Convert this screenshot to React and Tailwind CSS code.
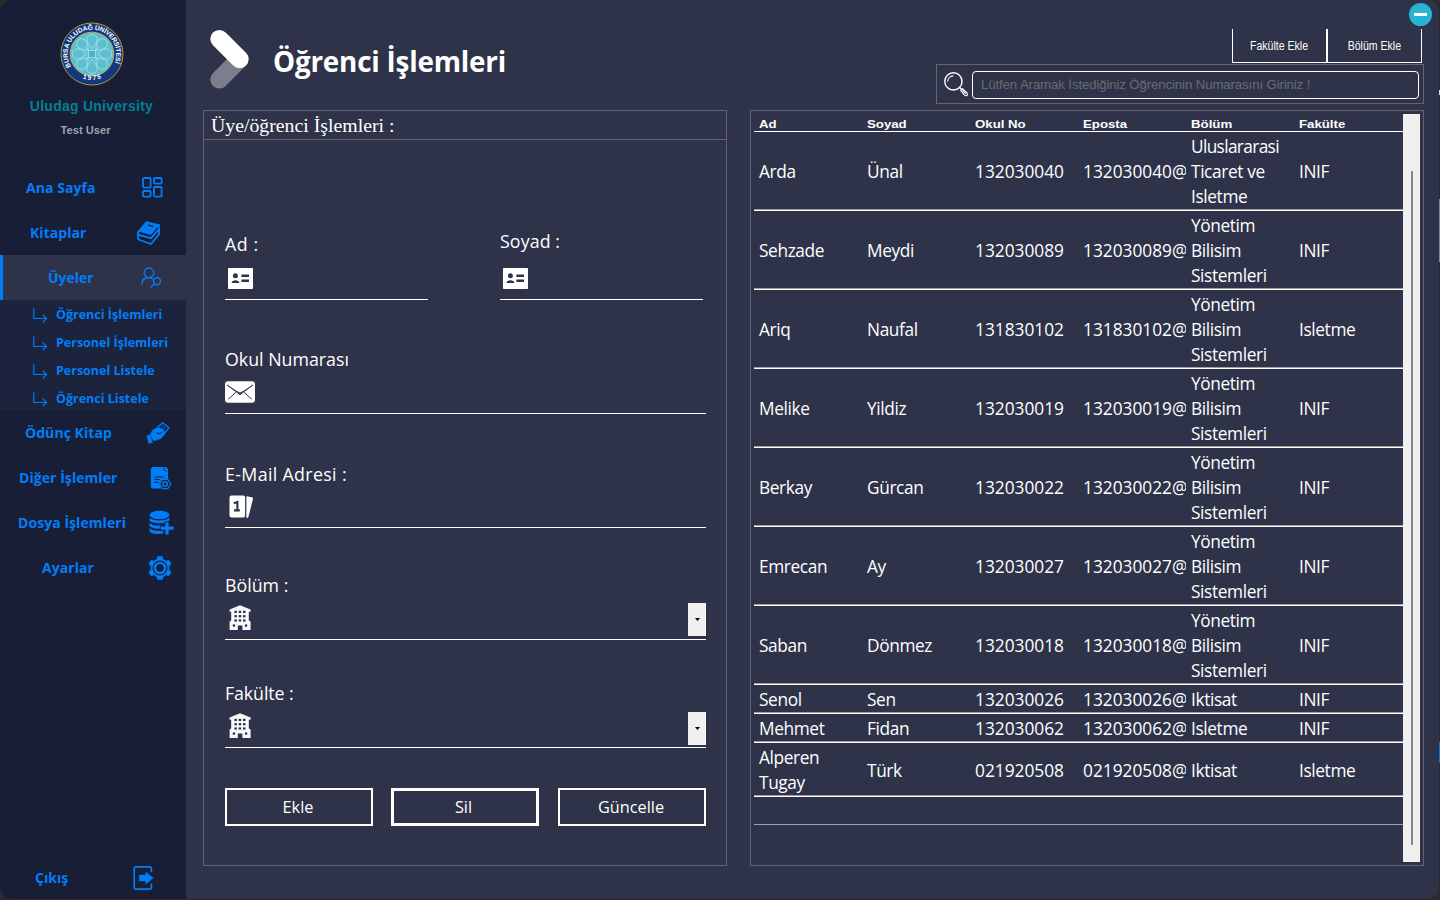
import React from "react";

const BLUE = "#007ef9";
const DARK = "#2e3349";

function Logo() {
  return (
    <svg width="64" height="64" viewBox="0 0 64 64" className="block">
      <defs>
        <path id="arcTop" d="M 11.2 44.5 A 24.3 24.3 0 1 1 52.8 44.5" />
        <path id="arcBottom" d="M 14 51.6 A 28.6 28.6 0 0 0 50 51.6" />
      </defs>
      <circle cx="32" cy="32" r="31" fill="#14387f" stroke="#b39a2c" strokeWidth="1" />
      <circle cx="32" cy="32" r="21.8" fill="#5bbfd0" stroke="#c2b04a" strokeWidth="1" />
      <g fill="none" stroke="#a5dfe6" strokeWidth="0.9">
        {[0, 45, 90, 135, 180, 225, 270, 315].map((a) => (
          <path key={a} transform={`rotate(${a} 32 32)`} d="M32 27 L27.6 20.5 C25.5 15.5 28.5 12.5 32 12.3 C35.5 12.5 38.5 15.5 36.4 20.5 Z" />
        ))}
        <path d="M25 25 L39 39 M39 25 L25 39" />
        <rect x="28.5" y="28.5" width="7" height="7" fill="#4fb3c8" />
      </g>
      <text fill="#fff" fontFamily="Liberation Sans, sans-serif" fontWeight="700" fontSize="6.6">
        <textPath href="#arcTop" startOffset="0" textLength="98">BURSA ULUDAĞ ÜNİVERSİTESİ</textPath>
      </text>
      <text fill="#fff" fontFamily="Liberation Sans, sans-serif" fontWeight="700" fontSize="6.6" textAnchor="middle">
        <textPath href="#arcBottom" startOffset="50%" textLength="19">1975</textPath>
      </text>
    </svg>
  );
}

const DashIcon = () => (
  <svg width="21" height="21" viewBox="0 0 21 21" fill="none" stroke={BLUE} strokeWidth="1.8">
    <rect x="1" y="1" width="7.6" height="9.6" rx="1" />
    <rect x="12" y="1" width="7.6" height="5.6" rx="1" />
    <rect x="1" y="14" width="7.6" height="5.6" rx="1" />
    <rect x="12" y="10" width="7.6" height="9.6" rx="1" />
  </svg>
);

const BooksIcon = () => (
  <svg width="23" height="24" viewBox="0 0 23 24" fill="none" stroke={BLUE} strokeLinejoin="round" strokeLinecap="round">
    <path d="M9.6 0.8 L22 3.8 L14 13.4 L1.8 10 Z" fill={BLUE} strokeWidth="1" />
    <path d="M11.4 4.1 L16 5.3" stroke="#181e36" strokeWidth="1.3" />
    <path d="M1.8 10 C0.4 11.6 0.9 13.6 2.4 14.2 L14 17.2 L22 8.2 V4" strokeWidth="1.8" />
    <path d="M1 13.4 V17.4 Q1.2 18.6 2.6 19 L14 23 L22 13.4 V9" strokeWidth="1.8" />
  </svg>
);

const UsersIcon = () => (
  <svg width="21" height="21" viewBox="0 0 21 21" fill="none" stroke={BLUE} strokeWidth="1.4" strokeLinecap="round">
    <circle cx="8" cy="5.8" r="4.8" />
    <path d="M0.9 17 C0.9 12.8 3.6 10.8 7.8 10.8" />
    <circle cx="16" cy="14.2" r="3.5" />
    <path d="M13.4 16.8 L10.2 19.9 M9.5 10.8 L11.6 11.8" />
  </svg>
);

const LendIcon = () => (
  <svg width="24" height="24" viewBox="0 0 24 24" fill="none" stroke={BLUE} strokeWidth="1.3" strokeLinejoin="round">
    <path d="M11 7 L16.5 1.8 L23 7 L14 17.5 L12 16" />
    <path d="M16.2 4.8 L19.8 7.8" strokeDasharray="1.5 1" />
    <path d="M4.5 13.5 C5.5 9.5 8.5 7 12.2 7 C15 6.6 17.5 7.8 18 9.2 C18.4 10.6 16.8 10.9 15.4 11.5 L18.8 10.6 C19.4 13.8 14.8 18.5 10.5 19 L7.5 19.7 Z" fill={BLUE} strokeWidth="0.6" />
    <path d="M11 11.6 C12.4 13.5 14.4 12.8 15.6 11" stroke="#181e36" strokeWidth="1.1" />
    <path d="M0.8 14.8 L4 13.8 L6.4 21.4 L2.8 22.8 Z" fill={BLUE} strokeWidth="0.4" />
  </svg>
);

const FileIcon = () => (
  <svg width="22" height="24" viewBox="0 0 22 24">
    <path d="M3 1 H13.5 L18 5.5 V13 A6 6 0 0 0 9.5 19 L11 22.6 H3 A2.4 2.4 0 0 1 0.8 20.4 V3.2 A2.4 2.4 0 0 1 3 1 Z" fill={BLUE} />
    <path d="M13.5 1 H16 L18 3 V5.5 H15.2 C14 5.3 13.5 4.4 13.5 3 Z" fill={BLUE} />
    <path d="M13.8 1.8 V3.4 Q14 5 15.6 5 H17" stroke="#181e36" strokeWidth="0.9" fill="none" />
    <path d="M4.5 11 H14 M4.5 13.6 H9.5 M4.5 16.4 H8.5" stroke="#181e36" strokeWidth="1" />
    <path d="M12.4 13.3 H17.8 L20.8 18 L17.8 22.7 H12.4 L9.6 18 Z" fill="#181e36" stroke={BLUE} strokeWidth="1.3" strokeLinejoin="round" />
    <circle cx="15.1" cy="18" r="2.2" fill="none" stroke={BLUE} strokeWidth="1.5" />
  </svg>
);

const DbIcon = () => (
  <svg width="25" height="25" viewBox="0 0 25 25">
    <ellipse cx="10.5" cy="5" rx="10" ry="4.2" fill={BLUE} />
    <g fill={BLUE}>
      <path d="M0.5 7.6 C3.5 11.4 17.5 11.4 20.5 7.6 V10 C18.5 14.4 2.5 14.4 0.5 10.6 Z" />
      <path d="M0.5 12.8 C3 16 10 15.8 14 15.2 V18 C8 19.4 2 18.4 0.5 15.8 Z" />
      <path d="M0.5 18 C3 21 9 21 14.4 20.4 V23.6 C8 24.4 1.5 23.8 0.5 20.9 Z" />
    </g>
    <path d="M18 11.6 V25 M11.2 18.2 H25" stroke="#181e36" strokeWidth="5.4" />
    <path d="M18 12.2 V24.4 M11.8 18.2 H24.6" stroke={BLUE} strokeWidth="3.2" />
  </svg>
);

const GearIcon = () => (
  <svg width="24" height="24" viewBox="0 0 24 24" fill="none" stroke={BLUE}>
    {[0, 60, 120, 180, 240, 300].map((a) => (
      <path key={a} transform={`rotate(${a} 12 12)`} d="M9 4 L9.7 0.4 H14.3 L15 4 Z" fill={BLUE} strokeWidth="0.6" />
    ))}
    <circle cx="12" cy="12" r="8.5" strokeWidth="2" />
    <circle cx="12" cy="12" r="5" strokeWidth="2.6" />
  </svg>
);

const ExitIcon = () => (
  <svg width="22" height="24" viewBox="0 0 22 24" fill="none" stroke={BLUE} strokeWidth="1.7">
    <path d="M18.4 6.2 V3 Q18.4 0.9 16.6 0.9 H3 Q1.2 0.9 1.2 3 V21 Q1.2 23.1 3 23.1 H16.6 Q18.4 23.1 18.4 21 V17.6" />
    <path d="M6.2 9 H12.6 V5.8 L20.4 12 L12.6 18.2 V15 H6.2 Z" fill={BLUE} strokeWidth="0.3" />
  </svg>
);

const SubArrow = () => (
  <svg width="15" height="15" viewBox="0 0 15 15" fill="none" stroke={BLUE} strokeWidth="1.2">
    <path d="M0.8 0.5 V10.5 H13.4 M9.6 6.6 L13.6 10.5 L9.6 14.4" />
  </svg>
);

const IdIcon = () => (
  <svg width="25" height="21" viewBox="0 0 25 21" className="block">
    <rect width="25" height="21" rx="0.8" fill="#fff" />
    <circle cx="7.4" cy="7.7" r="2.5" fill={DARK} />
    <path d="M3.6 15 C3.6 11.4 11.4 11.4 11.4 15 Z" fill={DARK} />
    <path d="M13.4 7.7 H21 M13.4 12.8 H21" stroke={DARK} strokeWidth="2.6" />
  </svg>
);

const MailIcon = () => (
  <svg width="30" height="22" viewBox="0 0 30 22" className="block">
    <rect y="0.3" width="30" height="21.4" rx="3" fill="#fff" />
    <path d="M2 4 L11.5 11 L15 13.8 L18.5 11 L28 4 L18.8 10 L15 12 L11.2 10 Z" fill={DARK} stroke={DARK} strokeWidth="0.8" />
    <path d="M3.2 18.2 L11.3 11 M26.8 18.2 L18.7 11" stroke={DARK} strokeWidth="1" />
  </svg>
);

const CardsIcon = () => (
  <svg width="25" height="24" viewBox="0 0 25 24" className="block">
    <rect x="0.5" y="0.5" width="15.6" height="22" rx="2" fill="#fff" />
    <path d="M17.4 1.2 L23 2.3 Q24.2 2.6 24 3.8 L19.4 22 Q18.8 23.2 17.4 22.8 Z" fill="#fff" />
    <path d="M4.8 8.2 L8.4 7 V15.4 M5 15.4 H10.8" fill="none" stroke={DARK} strokeWidth="2.1" />
  </svg>
);

const BuildingIcon = () => (
  <svg width="22" height="26" viewBox="0 0 22 26" className="block">
    <path d="M11 0.2 L21.6 4.6 V6.8 H19.8 V15.6 L21.6 16.6 V25 H13.4 V20.6 H8.8 V25 H0.6 V16.6 L2.2 15.6 V6.8 H0.6 V4.6 Z" fill="#f8f9fb" />
    <g fill={DARK}>
      {[5.8, 10.1, 14.4].map((y) => [5.4, 9.7, 14].map((x) => <rect key={x + "-" + y} x={x} y={y} width="2.5" height="2.2" />))}
      <rect x="3.8" y="19.4" width="2.3" height="2.3" />
      <rect x="15.9" y="19.4" width="2.3" height="2.3" />
    </g>
  </svg>
);

const SearchIcon = () => (
  <svg width="25" height="25" viewBox="0 0 25 25" fill="none" stroke="#fff" strokeWidth="1.4" strokeLinecap="round">
    <circle cx="9.4" cy="9.4" r="8.6" />
    <path d="M3.8 9.2 A5.6 5.6 0 0 1 9 3.9" strokeWidth="1.1" />
    <path d="M15.6 15.4 L17.4 17.2" />
    <path d="M16.8 18.6 L18.6 16.8 L22.8 20.6 Q24 22.4 23 23.4 Q21.8 24.2 20.4 22.8 Z M19 18.8 L21.4 21.4" strokeWidth="1.2" />
  </svg>
);

const topNav = [
  { label: "Ana Sayfa", pad: "pl-[26px]", icon: <DashIcon />, right: "pr-[23px]" },
  { label: "Kitaplar", pad: "pl-[30px]", icon: <BooksIcon />, right: "pr-[26px]" },
];
const subNav = ["Öğrenci İşlemleri", "Personel İşlemleri", "Personel Listele", "Öğrenci Listele"];
const bottomNav = [
  { label: "Ödünç Kitap", pad: "pl-[25px]", icon: <LendIcon />, right: "pr-4" },
  { label: "Diğer İşlemler", pad: "pl-[19px]", icon: <FileIcon />, right: "pr-[14px]" },
  { label: "Dosya İşlemleri", pad: "pl-[18px]", icon: <DbIcon />, right: "pr-3" },
  { label: "Ayarlar", pad: "pl-[42px]", icon: <GearIcon />, right: "pr-[14px]" },
];

function NavRow({ item }) {
  return (
    <div className={`flex h-[45px] shrink-0 items-center justify-between ${item.pad} ${item.right}`}>
      <span className="whitespace-nowrap text-[14px] font-bold leading-5 tracking-[0.06px]">{item.label}</span>
      {item.icon}
    </div>
  );
}

function Sidebar() {
  return (
    <aside className="flex h-full w-[186px] shrink-0 flex-col bg-[#181e36] text-[#007ef9]">
      <div className="flex h-[165px] shrink-0 flex-col items-center pt-[22px] pr-[3px] font-['Liberation_Sans',sans-serif]">
        <Logo />
        <div className="mt-[10px] whitespace-nowrap text-[14px] font-bold leading-5 tracking-[0.25px] text-[#047e95]">Uludag University</div>
        <div className="mt-[6px] mr-[11px] scale-x-[1.06] whitespace-nowrap text-[10.5px] font-bold leading-4 text-[#9ea1b0]">Test User</div>
      </div>
      {topNav.map((n) => <NavRow key={n.label} item={n} />)}
      <div className="flex h-[45px] shrink-0 items-center justify-between border-l-3 border-[#007ef9] bg-[#2e3349] pl-[45px] pr-6">
        <span className="text-[14px] font-bold leading-5">Üyeler</span>
        <UsersIcon />
      </div>
      <div className="h-[110px] shrink-0 bg-[#1c233d] pt-px">
        {subNav.map((s) => (
          <div key={s} className="flex h-7 items-center gap-[8px] pl-[33px]">
            <SubArrow />
            <span className="whitespace-nowrap text-[12.5px] font-bold">{s}</span>
          </div>
        ))}
      </div>
      {bottomNav.map((n) => <NavRow key={n.label} item={n} />)}
      <div className="mt-auto flex h-[42px] items-center justify-between pl-[35px] pr-[31px]">
        <span className="text-[14px] font-bold leading-5">Çıkış</span>
        <ExitIcon />
      </div>
    </aside>
  );
}

function Field({ label, width, labelClass, rowClass, iconPad, icon, combo }) {
  return (
    <div className={width}>
      <div className={`h-[25px] whitespace-nowrap text-[17.8px] leading-[25px] ${labelClass || ""}`}>{label}</div>
      <div className={`flex items-start justify-between border-b border-white ${rowClass}`}>
        <div className={iconPad}>{icon}</div>
        {combo && (
          <div className={combo}>
            <div className="flex h-[33px] w-[18px] items-center justify-center border-r border-white bg-[#f0f0f0] pl-px">
              <svg width="5" height="3" viewBox="0 0 5 3"><path d="M0 0 H5 L2.5 3 Z" fill="#000" /></svg>
            </div>
          </div>
        )}
      </div>
    </div>
  );
}

function FormPanel() {
  return (
    <section className="h-[756px] w-[524px] shrink-0 border border-[#64656b]">
      <div className="h-[29px] border-b border-[#64656b] pl-[7px] font-['Liberation_Serif',serif] text-[19.8px] leading-[29px]">Üye/öğrenci İşlemleri :</div>
      <div className="pl-[21px] pr-5">
        <div className="flex items-end pt-[89px]">
          <Field label="Ad :" width="w-[203px]" labelClass="tracking-[0.6px]" rowClass="h-[43px]" iconPad="pt-[11px] pl-[3px]" icon={<IdIcon />} />
          <div className="w-[72px]" />
          <Field label="Soyad :" width="w-[203px]" labelClass="tracking-[0.1px]" rowClass="h-[46px]" iconPad="pt-[14px] pl-[3px]" icon={<IdIcon />} />
        </div>
        <div className="pt-[47px]"><Field label="Okul Numarası" rowClass="h-[42px]" iconPad="pt-[9px]" icon={<MailIcon />} /></div>
        <div className="pt-[48px]"><Field label="E-Mail Adresi :" labelClass="tracking-[0.35px]" rowClass="h-[41px]" iconPad="pt-2 pl-[4px]" icon={<CardsIcon />} /></div>
        <div className="pt-[45px]"><Field label="Bölüm :" rowClass="h-[42px]" iconPad="pt-[7px] pl-[4px]" icon={<BuildingIcon />} combo="pt-[5px]" /></div>
        <div className="pt-[41px]"><Field label="Fakülte :" labelClass="tracking-[-0.1px]" rowClass="h-[42px]" iconPad="pt-[7px] pl-[4px]" icon={<BuildingIcon />} combo="pt-[6px]" /></div>
        <div className="flex pt-10 text-[16.3px]">
          <button className="h-[38px] w-[148px] border-2 border-white pr-[2px]">Ekle</button>
          <button className="ml-[18px] h-[38px] w-[148px] border-3 border-white pr-[3px]">Sil</button>
          <button className="ml-[19px] h-[38px] w-[148px] border-2 border-white pr-[2px]">Güncelle</button>
        </div>
      </div>
    </section>
  );
}

const YBS = ["Yönetim", "Bilisim", "Sistemleri"];
const rows = [
  { c: [["Arda"], ["Ünal"], "132030040", ["Uluslararasi", "Ticaret ve", "Isletme"], ["INIF"]], h: "h-[79px]" },
  { c: [["Sehzade"], ["Meydi"], "132030089", YBS, ["INIF"]], h: "h-[79px]" },
  { c: [["Ariq"], ["Naufal"], "131830102", YBS, ["Isletme"]], h: "h-[79px]" },
  { c: [["Melike"], ["Yildiz"], "132030019", YBS, ["INIF"]], h: "h-[79px]" },
  { c: [["Berkay"], ["Gürcan"], "132030022", YBS, ["INIF"]], h: "h-[79px]" },
  { c: [["Emrecan"], ["Ay"], "132030027", YBS, ["INIF"]], h: "h-[79px]" },
  { c: [["Saban"], ["Dönmez"], "132030018", YBS, ["INIF"]], h: "h-[79px]" },
  { c: [["Senol"], ["Sen"], "132030026", ["Iktisat"], ["INIF"]], h: "h-[29px]" },
  { c: [["Mehmet"], ["Fidan"], "132030062", ["Isletme"], ["INIF"]], h: "h-[29px]" },
  { c: [["Alperen", "Tugay"], ["Türk"], "021920508", ["Iktisat"], ["Isletme"]], h: "h-[54px]" },
];

function Lines({ lines }) {
  return (
    <div className="tracking-[-0.38px]">
      {lines.map((l) => <div key={l} className={l === "Uluslararasi" ? "tracking-[-0.65px]" : ""}>{l}</div>)}
    </div>
  );
}

function TablePanel() {
  return (
    <section className="flex h-[756px] w-[674px] shrink-0 border border-[#64656b] p-[3px]">
      <div className="w-[649px] shrink-0">
        <div className="grid h-[18px] grid-cols-[repeat(6,108px)] items-center border-b border-white font-['Liberation_Sans',sans-serif] text-[11.5px] font-bold leading-[14px]">
          {["Ad", "Soyad", "Okul No", "Eposta", "Bölüm", "Fakülte"].map((h) => (
            <div key={h} className="pl-[5px] pt-[3px]"><span className="inline-block origin-left scale-x-[1.15] whitespace-nowrap">{h}</span></div>
          ))}
        </div>
        {rows.map((r) => (
          <div key={r.c[2]} className={`border-b border-white ${r.h}`}>
            <div className="grid h-full grid-cols-[repeat(6,108px)] items-center border-b border-[#a0a0a0] pt-[2px] text-[17.3px] leading-[25px] *:whitespace-nowrap *:pl-[5px]">
              <div><Lines lines={r.c[0]} /></div>
              <div><Lines lines={r.c[1]} /></div>
              <div>{r.c[2]}</div>
              <div className="overflow-hidden">{r.c[2]}@</div>
              <div><Lines lines={r.c[3]} /></div>
              <div><Lines lines={r.c[4]} /></div>
            </div>
          </div>
        ))}
        <div className="h-[28px] border-b border-[#a0a0a0]" />
      </div>
      <div className="flex h-full w-[17px] shrink-0 justify-center bg-[#f0f0f0] pt-[57px] pb-[17px]">
        <div className="w-[2px] bg-[#868686]" />
      </div>
    </section>
  );
}

function Header() {
  return (
    <header className="flex h-[110px] justify-between">
      <div className="flex pl-[23px]">
        <svg width="42" height="62" viewBox="0 0 42 62" className="mt-7 block">
          <path d="M10.3 51.6 L30.6 31.2" stroke="#7b7e8c" strokeWidth="18" strokeLinecap="round" />
          <path d="M10.3 10.9 L30.6 31.2" stroke="#fff" strokeWidth="18" strokeLinecap="round" />
        </svg>
        <h1 className="mt-[41px] ml-[22px] whitespace-nowrap text-[27.8px] font-bold leading-10 tracking-[-0.2px]">Öğrenci İşlemleri</h1>
      </div>
      <div className="flex flex-col items-end font-['Liberation_Sans',sans-serif]">
        <div className="mr-[7px] mt-[3px] flex size-[23px] items-center justify-center rounded-full bg-[#25b5d3]">
          <div className="h-[3px] w-[13px] bg-white" />
        </div>
        <div className="mt-[3px] mr-[17px] flex h-[34px] text-[12px] leading-[34px]">
          <div className="flex w-[95px] justify-center border-x border-b border-white"><span className="scale-x-[0.88] whitespace-nowrap">Fakülte Ekle</span></div>
          <div className="flex w-[95px] justify-center border-x border-b border-white"><span className="scale-x-[0.88] whitespace-nowrap">Bölüm Ekle</span></div>
        </div>
        <div className="mr-[15px] mt-px flex h-10 w-[488px] items-center gap-[3px] border border-[#64656b] pl-[7px]">
          <SearchIcon />
          <div className="mt-[2px] h-7 w-[447px] rounded-[4px] border border-white pl-2 whitespace-nowrap text-[13.3px] leading-[25px] tracking-[-0.15px] text-[#696b6f]">Lütfen Aramak İstediğiniz Öğrencinin Numarasını Giriniz !</div>
        </div>
      </div>
    </header>
  );
}

export default function App() {
  return (
    <div className="flex h-[900px] w-[1440px] overflow-hidden bg-[#2b2b2b] font-['Open_Sans','Noto_Sans',sans-serif] text-white">
      <div className="flex h-[899px] w-[1439px] shrink-0 overflow-hidden rounded-[12px] bg-[#2e3349]">
        <Sidebar />
        <main className="w-[1253px] shrink-0">
          <Header />
          <div className="flex gap-[23px] pl-[17px]">
            <FormPanel />
            <TablePanel />
          </div>
        </main>
      </div>
      <div className="w-px shrink-0">
        <div className="mt-[90px] h-[5px] bg-[#dddddd]" />
        <div className="mt-[104px] h-[63px] bg-[#8a8a8c]" />
        <div className="mt-[480px] h-[21px] bg-[#0a7ad0]" />
      </div>
    </div>
  );
}
